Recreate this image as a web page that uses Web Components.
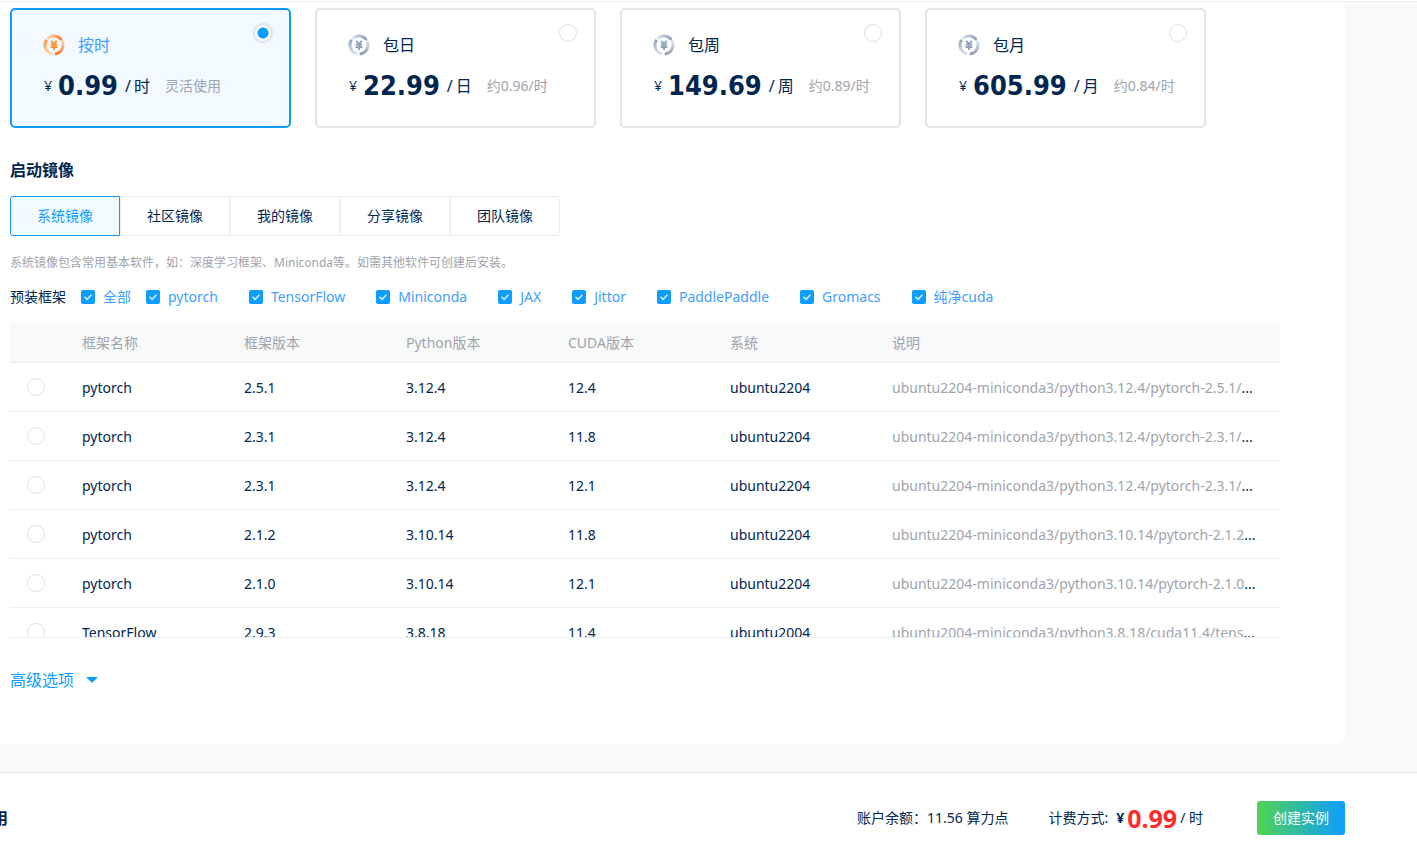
<!DOCTYPE html>
<html lang="zh-CN">
<head>
<meta charset="utf-8">
<meta name="viewport" content="width=device-width, initial-scale=1">
<title>创建实例</title>
<style>
	:root {
		--ink: #00264f;
		--muted: #a0a4ad;
		--blue: #0d9dff;
		--link: #409eff;
		--tint: #f2f9ff;
		--line: #ebeef5;
		--bg: #f8f9f9;
	}
	body {
		margin: 0;
		background: #fff;
		color: var(--ink);
		font: 14px/20px "Noto Sans", "Noto Sans CJK SC", sans-serif;
	}
</style>
</head>
<body>
<create-page>
	<plan-list>
		<plan-card name="按时" price="0.99" unit="时" note="灵活使用" checked></plan-card>
		<plan-card name="包日" price="22.99" unit="日" note="约0.96/时"></plan-card>
		<plan-card name="包周" price="149.69" unit="周" note="约0.89/时"></plan-card>
		<plan-card name="包月" price="605.99" unit="月" note="约0.84/时"></plan-card>
	</plan-list>
	<image-tabs label="启动镜像" items="系统镜像,社区镜像,我的镜像,分享镜像,团队镜像">系统镜像包含常用基本软件，如：深度学习框架、Miniconda等。如需其他软件可创建后安装。</image-tabs>
	<framework-filter label="预装框架" items="pytorch,TensorFlow,Miniconda,JAX,Jittor,PaddlePaddle,Gromacs,纯净cuda"></framework-filter>
	<image-table></image-table>
	<more-options>高级选项</more-options>
	<order-bar slot="footer" balance="11.56" price="0.99" unit="时">
		<span slot="title">用</span>
	</order-bar>
</create-page>

<script>
function render(el, html) {
	el.attachShadow({ mode: 'open' });
	el.shadowRoot.innerHTML = html;
	return el.shadowRoot;
}

const radioStyle = `
	input[type=radio] {
		appearance: none;
		box-sizing: border-box;
		display: block;
		width: 18px;
		height: 18px;
		margin: 0;
		border: 1px solid #dcdfe6;
		border-radius: 50%;
		background: #fff;
		cursor: pointer;
	}
	input[type=radio]:checked {
		background: radial-gradient(circle, var(--blue) 5px, #fff 6px);
		box-shadow: 0 0 2px 1px #dcdfe6;
	}
`;

class CreatePage extends HTMLElement {
	constructor() {
		super();
		render(this, `
			<style>
				:host {
					display: flex;
					flex-direction: column;
					min-height: 100vh;
					overflow: hidden;
				}
				header {
					height: 1px;
					border-bottom: 1px solid #eef0f0;
				}
				main {
					background: var(--bg);
					padding: 0 72px 28px 0;
				}
				section {
					display: flex;
					flex-direction: column;
					padding: 6px 65px 52px 10px;
					border-radius: 0 0 10px 0;
					background: #fff;
				}
			</style>
			<header></header>
			<main><section><slot></slot></section></main>
			<slot name="footer"></slot>
		`);
	}
}

class PlanList extends HTMLElement {
	constructor() {
		super();
		render(this, `
			<style>
				:host {
					display: flex;
					flex-wrap: wrap;
					gap: 24px;
				}
			</style>
			<slot></slot>
		`);
		this.addEventListener('plan-select', e => {
			this.querySelectorAll('plan-card').forEach(card => {
				card.toggleAttribute('checked', card === e.target);
			});
		});
	}
}

class PlanCard extends HTMLElement {
	static observedAttributes = ['checked'];

	connectedCallback() {
		if (this.shadowRoot) return;
		const root = render(this, `
			<style>
				:host {
					box-sizing: border-box;
					flex: 0 1 281px;
					display: block;
					height: 120px;
					padding: 14px 17px 0 31px;
					border: 2px solid #e0e3e8;
					border-radius: 5px;
					background: #fff;
					--ring-a: #8fa3b8;
					--ring-b: #dbe3ec;
					--mark: #8fa3b8;
				}
				:host([checked]) {
					border-color: var(--blue);
					background: var(--tint);
					--ring-a: #ff7d3c;
					--ring-b: #ffd9a8;
					--mark: #ff9330;
				}
				${radioStyle}
				.head {
					display: flex;
					justify-content: space-between;
				}
				label {
					display: flex;
					align-items: center;
					gap: 13px;
					margin-top: 9px;
					font-size: 16px;
					line-height: 24px;
				}
				:host([checked]) label { color: var(--link); }
				svg { width: 22px; height: 22px; }
				.price {
					display: flex;
					align-items: center;
					margin-top: 9px;
					padding-left: 1px;
					line-height: 40px;
					white-space: nowrap;
				}
				b {
					margin: 0 7px 0 6px;
					font-family: "DejaVu Sans Condensed", "Noto Sans", sans-serif;
					font-size: 27px;
				}
				.unit {
					display: flex;
					gap: 3px;
					font-size: 16px;
				}
				.note { margin-left: 15px; color: var(--muted); }
			</style>
			<div class="head">
				<label for="pick">
					<svg viewBox="0 0 22 22" fill="none" aria-hidden="true">
						<defs>
							<linearGradient id="top" x1="1" y1="0" x2="0" y2="0">
								<stop offset="0" stop-color="var(--ring-a)"/>
								<stop offset="1" stop-color="var(--ring-b)"/>
							</linearGradient>
							<linearGradient id="left" x1="0" y1="0" x2="0" y2="1">
								<stop offset="0" stop-color="var(--mark)"/>
								<stop offset="1" stop-color="var(--ring-b)"/>
							</linearGradient>
							<linearGradient id="right" x1="0" y1="1" x2="0" y2="0">
								<stop offset="0" stop-color="var(--ring-a)"/>
								<stop offset="1" stop-color="var(--ring-b)"/>
							</linearGradient>
						</defs>
						<g stroke-width="3">
							<path d="M5.3 4A9 9 0 0 1 17.7 5" stroke="url(#top)" stroke-linecap="round"/>
							<path d="M3.6 5.9A9 9 0 0 0 9.4 19.9" stroke="url(#left)"/>
							<path d="M19.2 7.4A9 9 0 0 1 13 19.8" stroke="url(#right)" stroke-linecap="round"/>
						</g>
						<path d="M8.2 6.8L11 10.2l2.8-3.4M7.6 10.6h6.8M7.6 13h6.8M11 10v6" stroke="var(--mark)" stroke-width="1.9"/>
					</svg>
					<span>${this.getAttribute('name')}</span>
				</label>
				<input type="radio" id="pick">
			</div>
			<div class="price">
				<span>¥</span><b>${this.getAttribute('price')}</b>
				<span class="unit"><span>/</span><span>${this.getAttribute('unit')}</span></span>
				<span class="note">${this.getAttribute('note')}</span>
			</div>
		`);
		this.input = root.querySelector('input');
		this.input.checked = this.hasAttribute('checked');
		this.input.addEventListener('change', () => {
			this.dispatchEvent(new CustomEvent('plan-select', { bubbles: true }));
		});
	}

	attributeChangedCallback() {
		if (this.input) this.input.checked = this.hasAttribute('checked');
	}
}

class ImageTabs extends HTMLElement {
	connectedCallback() {
		if (this.shadowRoot) return;
		const items = this.getAttribute('items').split(',');
		const root = render(this, `
			<style>
				:host { display: block; margin-top: 30px; }
				h2 {
					margin: 0 0 14px;
					font-size: 16px;
					line-height: 24px;
				}
				nav { display: flex; }
				button {
					box-sizing: border-box;
					width: 110px;
					height: 40px;
					padding: 0;
					border: 1px solid #ebedf0;
					background: #fff;
					color: inherit;
					font: inherit;
					cursor: pointer;
				}
				button:first-child { border-radius: 3px 0 0 3px; }
				button:last-child { border-radius: 0 3px 3px 0; }
				button[aria-pressed=true] {
					border-color: var(--blue);
					background: var(--tint);
					color: var(--blue);
				}
				p {
					margin: 17px 0 0;
					color: var(--muted);
					font-size: 12px;
				}
			</style>
			<h2>${this.getAttribute('label')}</h2>
			<nav>${items.map((t, i) => `<button type="button" aria-pressed="${i === 0}">${t}</button>`).join('')}</nav>
			<p><slot></slot></p>
		`);
		const buttons = root.querySelectorAll('button');
		buttons.forEach(btn => btn.addEventListener('click', () => {
			buttons.forEach(b => b.setAttribute('aria-pressed', b === btn));
		}));
	}
}

class FrameworkFilter extends HTMLElement {
	connectedCallback() {
		if (this.shadowRoot) return;
		const items = this.getAttribute('items').split(',');
		const box = t => `<label><input type="checkbox" checked>${t}</label>`;
		const root = render(this, `
			<style>
				:host {
					display: flex;
					align-items: center;
					margin-top: 14px;
				}
				div { display: flex; flex-wrap: wrap; gap: 0 31px; }
				label {
					display: flex;
					align-items: center;
					gap: 8px;
					color: var(--link);
				}
				.all { margin: 0 15px; }
				input {
					appearance: none;
					width: 14px;
					height: 14px;
					margin: 0;
					border-radius: 2px;
					background: #dcdfe6;
				}
				input:checked {
					background: var(--blue) url('data:image/svg+xml,<svg xmlns="http://www.w3.org/2000/svg" viewBox="0 0 14 14" fill="none" stroke="white" stroke-opacity=".8" stroke-width="1.6"><path d="M3.5 6.8l2.6 2.5 4.4-4.6"/></svg>');
				}
			</style>
			<span>${this.getAttribute('label')}</span>
			<label class="all"><input type="checkbox" checked>全部</label>
			<div>${items.map(box).join('')}</div>
		`);
		const all = root.querySelector('.all input');
		const boxes = [...root.querySelectorAll('div input')];
		all.addEventListener('change', () => boxes.forEach(b => b.checked = all.checked));
		boxes.forEach(b => b.addEventListener('change', () => all.checked = boxes.every(x => x.checked)));
	}
}

// the last field is a shortened path, the table puts the dots after it
const images = [
	['pytorch', '2.5.1', '3.12.4', '12.4', 'ubuntu2204', 'ubuntu2204-miniconda3/python3.12.4/pytorch-2.5.1/'],
	['pytorch', '2.3.1', '3.12.4', '11.8', 'ubuntu2204', 'ubuntu2204-miniconda3/python3.12.4/pytorch-2.3.1/'],
	['pytorch', '2.3.1', '3.12.4', '12.1', 'ubuntu2204', 'ubuntu2204-miniconda3/python3.12.4/pytorch-2.3.1/'],
	['pytorch', '2.1.2', '3.10.14', '11.8', 'ubuntu2204', 'ubuntu2204-miniconda3/python3.10.14/pytorch-2.1.2'],
	['pytorch', '2.1.0', '3.10.14', '12.1', 'ubuntu2204', 'ubuntu2204-miniconda3/python3.10.14/pytorch-2.1.0'],
	['TensorFlow', '2.9.3', '3.8.18', '11.4', 'ubuntu2004', 'ubuntu2004-miniconda3/python3.8.18/cuda11.4/tens'],
];

class ImageTable extends HTMLElement {
	constructor() {
		super();
		const heads = ['框架名称', '框架版本', 'Python版本', 'CUDA版本', '系统', '说明'];
		const row = ([name, version, python, cuda, os, path], i) => `
			<tr>
				<td><input type="radio" name="image" aria-label="${name} ${version}" value="${i}"></td>
				<td>${name}</td>
				<td>${version}</td>
				<td>${python}</td>
				<td>${cuda}</td>
				<td>${os}</td>
				<td><span>${path}</span>...</td>
			</tr>`;
		render(this, `
			<style>
				:host {
					display: block;
					box-sizing: border-box;
					height: 315px;
					margin-top: 16px;
					border-bottom: 1px solid var(--line);
					overflow: auto;
					scrollbar-width: none;
				}
				${radioStyle}
				table {
					width: 100%;
					table-layout: fixed;
					border-collapse: separate;
					border-spacing: 0;
				}
				col { width: 162px; }
				col:first-child { width: 62px; }
				col:last-child { width: auto; }
				th, td {
					box-sizing: border-box;
					padding: 0 10px;
					border-bottom: 1px solid var(--line);
					overflow: hidden;
					text-align: left;
					text-overflow: ellipsis;
					white-space: nowrap;
				}
				th {
					height: 40px;
					background: var(--bg);
					color: var(--muted);
					font-weight: normal;
				}
				td { height: 49px; }
				td + td { padding-top: 2px; }
				td:first-child { padding-left: 17px; }
				td span { color: var(--muted); }
			</style>
			<table>
				<colgroup><col><col><col><col><col><col><col></colgroup>
				<thead><tr><th></th>${heads.map(h => `<th>${h}</th>`).join('')}</tr></thead>
				<tbody>${images.map(row).join('')}</tbody>
			</table>
		`);
	}
}

class MoreOptions extends HTMLElement {
	constructor() {
		super();
		render(this, `
			<style>
				:host { display: block; margin-top: 30px; }
				button {
					display: flex;
					align-items: center;
					gap: 12px;
					padding: 0;
					border: 0;
					background: none;
					color: var(--blue);
					font: inherit;
					font-size: 16px;
					line-height: 24px;
					cursor: pointer;
				}
				i {
					border: 6px solid transparent;
					border-top-color: var(--blue);
					border-bottom: 0;
				}
			</style>
			<button type="button"><slot></slot><i></i></button>
		`);
	}
}

class OrderBar extends HTMLElement {
	connectedCallback() {
		if (this.shadowRoot) return;
		render(this, `
			<style>
				:host {
					display: flex;
					align-items: center;
					gap: 40px;
					padding: 28px 72px 16px 0;
					border-top: 1px solid #e2e4e4;
					background: #fff;
				}
				/* the title runs off the left edge of the scrolled page */
				.title {
					margin: 0 auto 0 -8px;
					font-size: 16px;
					font-weight: bold;
				}
				.pay {
					display: flex;
					align-items: center;
					margin-right: 14px;
				}
				.pay em {
					margin: 0 3px;
					color: #ff2b2b;
					font-size: 25px;
					font-style: normal;
					font-weight: bold;
				}
				.pay .sign { margin-left: 8px; font-weight: bold; }
				button {
					width: 88px;
					height: 34px;
					padding: 0;
					border: 0;
					border-radius: 3px;
					background: linear-gradient(90deg, #51d351, #0d9dff);
					color: #fff;
					font: inherit;
					cursor: pointer;
				}
			</style>
			<div class="title"><slot name="title"></slot></div>
			<div>账户余额：${this.getAttribute('balance')} 算力点</div>
			<div class="pay">
				<span>计费方式:</span><span class="sign">¥</span><em>${this.getAttribute('price')}</em><span>/ ${this.getAttribute('unit')}</span>
			</div>
			<button type="button">创建实例</button>
		`);
	}
}

customElements.define('create-page', CreatePage);
customElements.define('plan-list', PlanList);
customElements.define('plan-card', PlanCard);
customElements.define('image-tabs', ImageTabs);
customElements.define('framework-filter', FrameworkFilter);
customElements.define('image-table', ImageTable);
customElements.define('more-options', MoreOptions);
customElements.define('order-bar', OrderBar);
</script>
</body>
</html>
